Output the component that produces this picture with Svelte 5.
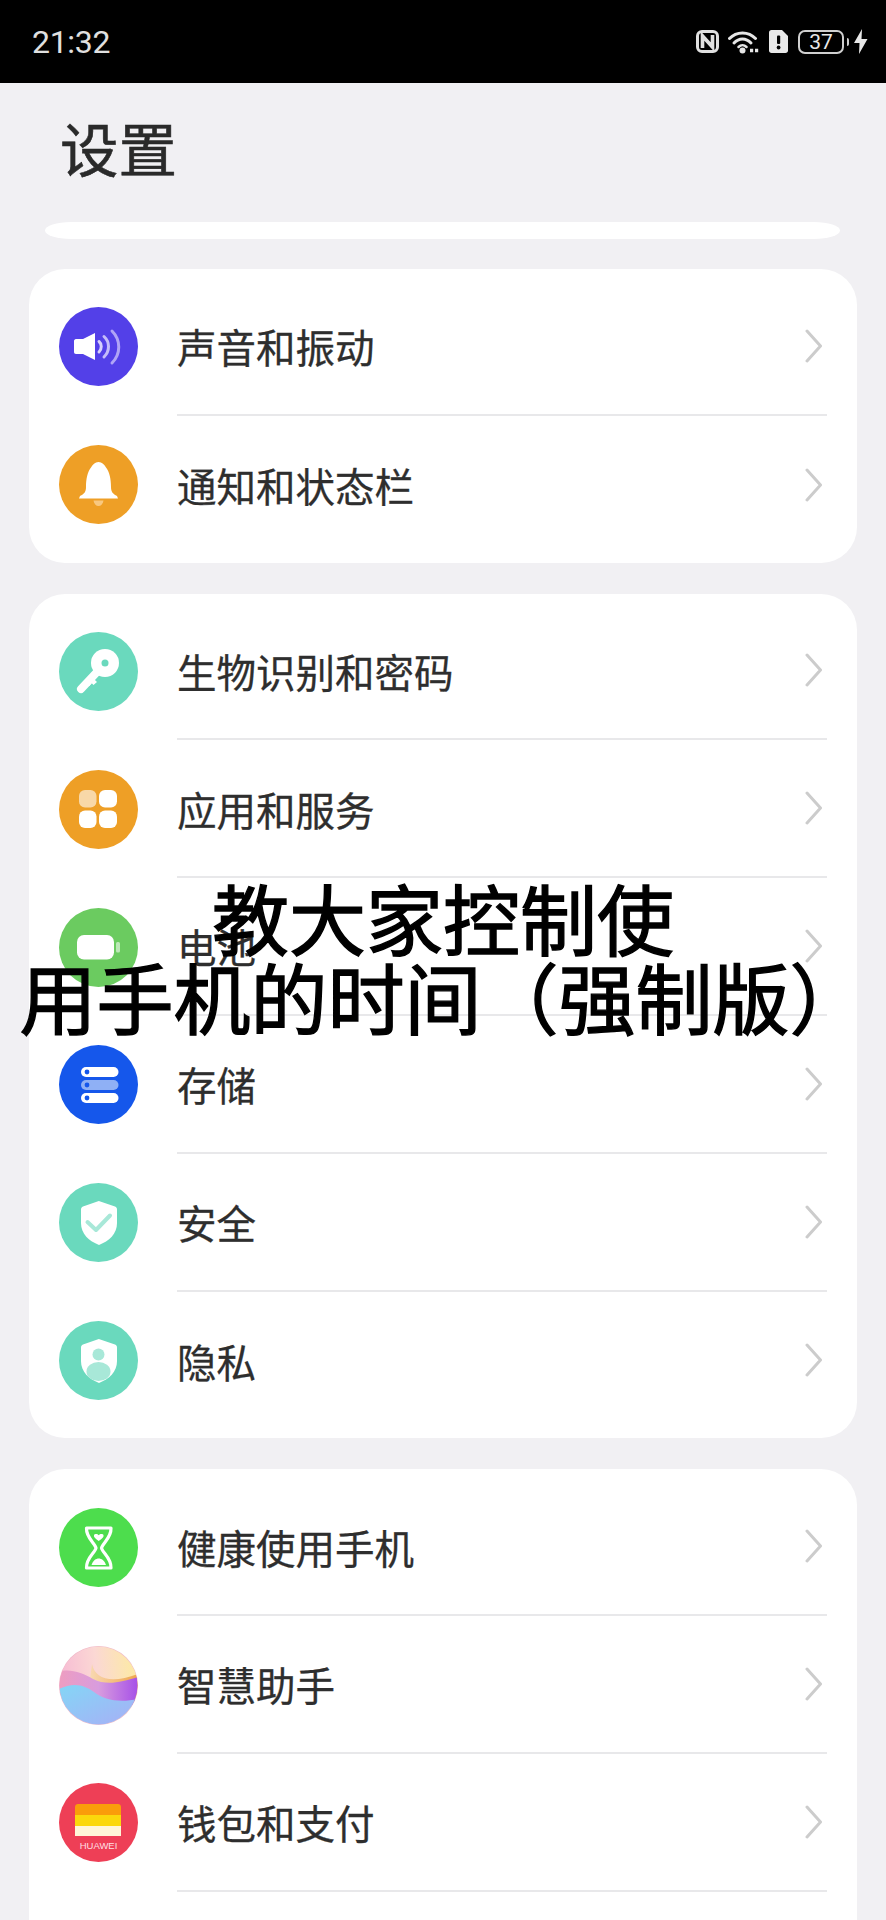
<script>
  const groups = [
    [
      { id: 'sound', label: '声音和振动', color: '#5340e8' },
      { id: 'bell', label: '通知和状态栏', color: '#ee9f26' }
    ],
    [
      { id: 'key', label: '生物识别和密码', color: '#6ad9bd' },
      { id: 'apps', label: '应用和服务', color: '#ee9f26' },
      { id: 'battery', label: '电池', color: '#6bcb60' },
      { id: 'storage', label: '存储', color: '#1557eb' },
      { id: 'shield', label: '安全', color: '#6ad9bd' },
      { id: 'privacy', label: '隐私', color: '#6ad9bd' }
    ],
    [
      { id: 'hourglass', label: '健康使用手机', color: '#4ddd4d' },
      { id: 'assistant', label: '智慧助手', color: '#f5c9d8' },
      { id: 'wallet', label: '钱包和支付', color: '#ee3f56' }
    ]
  ];
</script>

<div class="page">
  <header class="status">
    <span class="time">21:32</span>
    <div class="status-icons">
      <svg class="s-nfc" width="23" height="23" viewBox="0 0 23 23" fill="none" stroke="#e0e0e0">
        <rect x="1.500" y="1.500" width="20" height="20" rx="4.500" stroke-width="3" />
        <path d="M6.500 18V6L16.500 17V5" stroke-width="3.600" />
      </svg>
      <svg class="s-wifi" width="32" height="24" viewBox="0 0 32 24" fill="none" stroke="#e6e6e6" stroke-width="3" stroke-linecap="round">
        <path d="M1.500 8.500C8.500 1 20.500 1 27.500 8.500" />
        <path d="M6 13C11 7.500 18 7.500 23 13" />
        <path d="M10.500 17C13 14.500 16 14.500 18.500 17" stroke-width="2.500" />
        <circle cx="14.500" cy="20.500" r="3" fill="#e6e6e6" stroke="none" />
        <path d="M22 20.500H31" stroke-width="3.500" stroke-dasharray="3.200 1.800" stroke-linecap="butt" />
      </svg>
      <svg class="s-sim" width="19" height="23" viewBox="0 0 19 23">
        <path d="M2.500 0H13L19 6V20.500C19 22 18 23 16.500 23H2.500C1 23 0 22 0 20.500V2.500C0 1 1 0 2.500 0Z" fill="#e8e8e8" />
        <rect x="8" y="5.500" width="3.200" height="8.500" rx="1" fill="#000" />
        <circle cx="9.600" cy="17.500" r="1.900" fill="#000" />
      </svg>
      <div class="s-bat"><span>37</span></div>
      <div class="s-nub"></div>
      <svg class="s-bolt" width="15" height="25" viewBox="0 0 15 25">
        <path d="M9 0L1 14H6.500L6 25L14.500 10H8.500Z" fill="#e8e8e8" />
      </svg>
    </div>
  </header>

  <h1 class="title">设置</h1>
  <div class="search-stub"></div>

  <main class="groups">
    {#each groups as rows, g}
      <section class="card" class:open={g === 2}>
        {#each rows as row, i}
          <div class="row">
            <svg class="icon" width="79" height="79" viewBox="0 0 79 79">
              {#if row.id === 'assistant'}
                <defs>
                  <clipPath id="ball"><circle cx="39.500" cy="39.500" r="39" /></clipPath>
                  <linearGradient id="a-base" x1="0" y1="0.100" x2="1" y2="0">
                    <stop offset="0" stop-color="#f7bcd4" />
                    <stop offset="0.450" stop-color="#fbd8d4" />
                    <stop offset="1" stop-color="#fdec9e" />
                  </linearGradient>
                  <linearGradient id="a-orange" x1="0" y1="0" x2="1" y2="0">
                    <stop offset="0" stop-color="#f9dcb8" />
                    <stop offset="1" stop-color="#efa44c" />
                  </linearGradient>
                  <linearGradient id="a-band" x1="0" y1="0" x2="1" y2="0">
                    <stop offset="0" stop-color="#ee9dc0" />
                    <stop offset="0.500" stop-color="#d89cde" />
                    <stop offset="1" stop-color="#a650e8" />
                  </linearGradient>
                  <linearGradient id="a-blue" x1="0" y1="0" x2="1" y2="1">
                    <stop offset="0" stop-color="#84d6f6" />
                    <stop offset="1" stop-color="#a8aef6" />
                  </linearGradient>
                </defs>
                <circle cx="39.500" cy="39.500" r="39.500" fill="#f0b8c8" />
                <g clip-path="url(#ball)">
                  <rect width="79" height="79" fill="url(#a-base)" />
                  <path d="M33 18C36 33 52 38 79 28V56H28Z" fill="url(#a-orange)" />
                  <path d="M0 26C10 22 24 27 34 33C48 40 62 36 79 31V60L40 56L0 50Z" fill="url(#a-band)" />
                  <path d="M0 43C15 36 25 39 35 46C45 54 60 57 79 53V79H0Z" fill="url(#a-blue)" />
                </g>
              {:else}
                <circle cx="39.500" cy="39.500" r="39.500" fill={row.color} />
              {/if}

              {#if row.id === 'sound'}
                <path d="M17 32H24L36 26V53L24 47H17C15.800 47 15 46 15 45V34C15 33 15.800 32 17 32Z" fill="#fff" />
                <g fill="none" stroke-linecap="round">
                  <path d="M40 34.500C43 37 43 42 40 45" stroke="#d6d0fb" stroke-width="3" />
                  <path d="M45 29.500C51 35 51 44 45 50" stroke="#c4bcf9" stroke-width="3" />
                  <path d="M53 24C62 33 62 47 53 56" stroke="#b0a5f6" stroke-width="3" />
                </g>
              {:else if row.id === 'bell'}
                <path d="M39.500 17C43 17 45.500 19.500 47 22.500C50.500 27 52 34 52 42C52 47 54 49 58 51L59 53.500H20L21 51C25 49 27 47 27 42C27 34 28.500 27 32 22.500C33.500 19.500 36 17 39.500 17Z" fill="#fff" />
                <path d="M34.500 55.500H44.500C44 59 42 61 39.500 61C37 61 35 59 34.500 55.500Z" fill="#f8c880" />
              {:else if row.id === 'key'}
                <circle cx="46" cy="31" r="14" fill="#fff" />
                <circle cx="46" cy="31" r="3.500" fill={row.color} />
                <path d="M38 40L22 57" stroke="#fff" stroke-width="8" stroke-linecap="round" />
                <path d="M32 44L38 50L34.500 53L32.500 51L30.500 54L25 50Z" fill="#fff" />
              {:else if row.id === 'apps'}
                <rect x="20" y="20" width="17.500" height="17.500" rx="6" fill="#fff" opacity="0.600" />
                <rect x="40" y="20" width="18" height="17.500" rx="6" fill="#fff" />
                <rect x="20" y="40.500" width="17.500" height="17.500" rx="6" fill="#fff" />
                <rect x="40" y="40.500" width="18" height="17.500" rx="6" fill="#fff" />
              {:else if row.id === 'battery'}
                <rect x="18" y="27" width="37" height="24.500" rx="7" fill="#fff" />
                <rect x="57" y="34" width="4" height="10.500" rx="1.500" fill="#bde8b8" />
              {:else if row.id === 'storage'}
                <rect x="22" y="22" width="37.500" height="10" rx="5" fill="#fff" />
                <rect x="22" y="35" width="37.500" height="10" rx="5" fill="#8fb0f5" />
                <rect x="22" y="48" width="37.500" height="10" rx="5" fill="#fff" />
                <circle cx="28" cy="27" r="2.400" fill={row.color} />
                <circle cx="28" cy="40" r="2.400" fill={row.color} />
                <circle cx="28" cy="53" r="2.400" fill={row.color} />
              {:else if row.id === 'shield' || row.id === 'privacy'}
                <path d="M39.800 18L56 23.500C57.300 24 58 25 58 26.500V40C58 51 50 58 40 62C30 58 22 51 22 40V26.500C22 25 22.700 24 24 23.500Z" fill="#fff" />
                {#if row.id === 'shield'}
                  <path d="M28.500 39L37 47L51 32.500" fill="none" stroke="#a8e8d8" stroke-width="4" stroke-linecap="round" stroke-linejoin="round" />
                {:else}
                  <circle cx="39.500" cy="33.500" r="6" fill="#a8e8d8" />
                  <ellipse cx="39.500" cy="50.500" rx="12" ry="9.500" fill="#a8e8d8" />
                {/if}
              {:else if row.id === 'hourglass'}
                <path d="M27.500 20H52C52.500 30 43.500 35 42.500 40C43.500 45 52.500 50 52 60H27.500C27 50 36 45 37 40C36 35 27 30 27.500 20Z" fill="none" stroke="#fff" stroke-width="3.200" stroke-linejoin="round" />
                <path d="M39.700 33C36 30.500 34.500 29 35 27C35.800 25.500 38.500 25.500 39.700 27.200C41 25.500 43.700 25.500 44.500 27C45 29 43.500 30.500 39.700 33Z" fill="#fff" />
                <path d="M32.500 57C34 52.500 37 50.500 39.700 50.500C42.500 50.500 45.500 52.500 47 57Z" fill="#fff" />
              {:else if row.id === 'wallet'}
                <path d="M16 24C16 22.300 17.300 21 19 21H59C60.700 21 62 22.300 62 24V32H16Z" fill="#fa9d0a" />
                <rect x="16" y="32" width="46" height="11" fill="#fbd80c" />
                <path d="M16 43H62V53H16Z" fill="#fff6d8" />
                <text class="huawei" x="39.500" y="66" text-anchor="middle">HUAWEI</text>
              {/if}
            </svg>
            <div class="body" class:last={i === rows.length - 1 && g !== 2}>
              <span class="label">{row.label}</span>
              <svg class="chev" width="18" height="34" viewBox="0 0 18 34" fill="none">
                <path d="M2 2L15.500 17L2 32" stroke="#cccccc" stroke-width="3" stroke-linecap="round" stroke-linejoin="round" />
              </svg>
            </div>
          </div>
        {/each}
      </section>
    {/each}
  </main>

  <div class="caption">
    <div>教大家控制使</div>
    <div>用手机的时间（强制版）</div>
  </div>
</div>

<style>
  :global(body) {
    margin: 0;
    background: #f1f0f3;
  }
  .page {
    position: relative;
    width: 886px;
    height: 1920px;
    overflow: hidden;
    background: #f1f0f3;
    font-family: "Noto Sans CJK SC", "Noto Sans", sans-serif;
  }
  .status {
    height: 83px;
    background: #000;
    display: flex;
    align-items: center;
    justify-content: space-between;
    padding: 0 18px 0 32px;
    box-sizing: border-box;
  }
  .time {
    font-family: Roboto, sans-serif;
    font-size: 32px;
    color: #e0e0e0;
    letter-spacing: -0.3px;
  }
  .status-icons {
    display: flex;
    align-items: center;
  }
  .s-nfc { margin-right: 9px; }
  .s-wifi { margin-right: 9px; }
  .s-sim { margin-right: 10px; }
  .s-bat {
    width: 46px;
    height: 24px;
    box-sizing: border-box;
    border: 2px solid #cfcfcf;
    border-radius: 7px;
    display: flex;
    align-items: center;
    justify-content: center;
    color: #e8e8e8;
    font-family: Roboto, sans-serif;
    font-size: 21px;
    line-height: 20px;
  }
  .s-nub {
    width: 2px;
    height: 8px;
    margin: 0 4px 0 3px;
    background: #cfcfcf;
    border-radius: 0 2px 2px 0;
  }
  .title {
    margin: 0;
    height: 139px;
    padding: 0 0 11px 60px;
    box-sizing: border-box;
    display: flex;
    align-items: center;
    font-size: 58.500px;
    font-weight: 400;
    -webkit-text-stroke: 0.6px #2a2a2a;
    color: #2a2a2a;
    line-height: 1;
  }
  .search-stub {
    height: 17px;
    margin: 0 46px 30px 45px;
    background: #fff;
    border-radius: 26px / 8.500px;
  }
  .groups {
    display: flex;
    flex-direction: column;
    gap: 31px;
    padding: 0 29px;
  }
  .card {
    background: #fff;
    border-radius: 36px;
    padding: 9px 0;
  }
  .card.open {
    padding-bottom: 140px;
  }
  .row {
    height: 137.800px;
    display: flex;
    align-items: center;
    padding: 0 30px;
  }
  .icon {
    flex: none;
    margin-right: 39px;
  }
  .body {
    flex: 1;
    align-self: stretch;
    display: flex;
    align-items: center;
    justify-content: space-between;
    padding-right: 4px;
    border-bottom: 2px solid #e8e8ea;
  }
  .body.last {
    border-bottom: none;
  }
  .label {
    font-size: 39.500px;
    color: #2e2e2e;
    line-height: 1;
    -webkit-text-stroke: 0.3px #2e2e2e;
  }
  .huawei {
    font-family: "Liberation Sans", sans-serif;
    font-size: 9.500px;
    fill: #ffdfe3;
  }
  .caption {
    position: absolute;
    top: 877px;
    left: 0;
    width: 886px;
    text-align: center;
    font-size: 77px;
    line-height: 79px;
    font-weight: 400;
    -webkit-text-stroke: 1.400px #000;
    color: #000;
    white-space: nowrap;
  }
</style>
